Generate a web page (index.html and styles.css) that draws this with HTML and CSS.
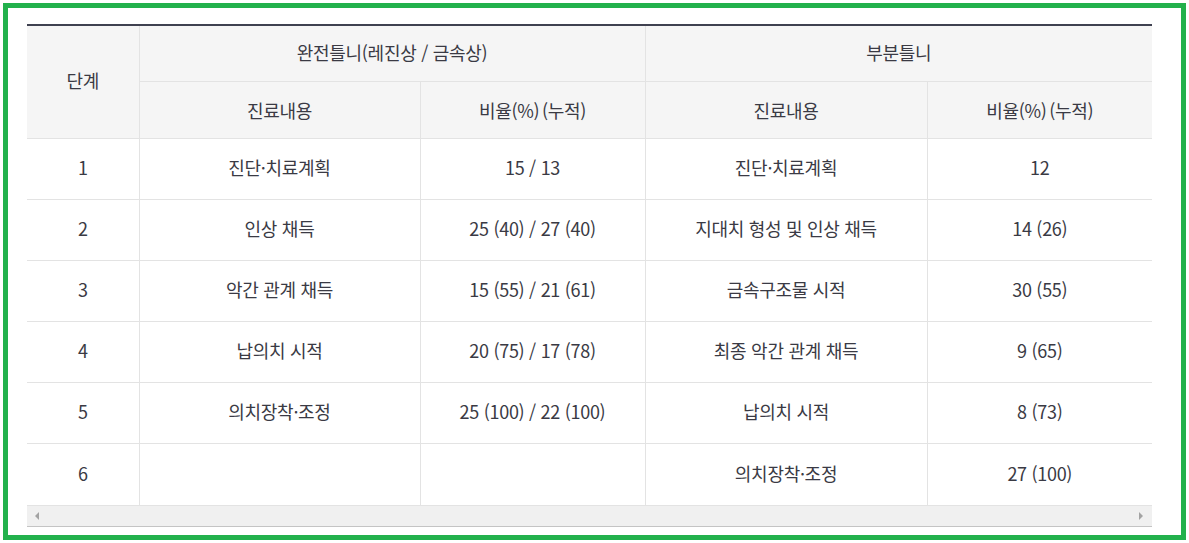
FILE: index.html
```html
<!DOCTYPE html>
<html lang="ko">
<head>
<meta charset="utf-8">
<link rel="stylesheet" href="styles.css">
</head>
<body>
<div class="frame">
  <div class="scroller">
    <table class="stage-table">
      <colgroup>
        <col class="c-step"><col class="c-wide"><col class="c-narrow"><col class="c-wide2"><col class="c-narrow2">
      </colgroup>
      <thead>
        <tr class="h1">
          <th rowspan="2" class="first">단계</th>
          <th colspan="2">완전틀니(레진상 / 금속상)</th>
          <th colspan="2">부분틀니</th>
        </tr>
        <tr class="h2">
          <th>진료내용</th>
          <th class="tight">비율(%) (누적)</th>
          <th>진료내용</th>
          <th class="tight">비율(%) (누적)</th>
        </tr>
      </thead>
      <tbody>
        <tr><td class="first">1</td><td>진단·치료계획</td><td>15 / 13</td><td>진단·치료계획</td><td>12</td></tr>
        <tr><td class="first">2</td><td>인상 채득</td><td>25 (40) / 27 (40)</td><td>지대치 형성 및 인상 채득</td><td>14 (26)</td></tr>
        <tr><td class="first">3</td><td>악간 관계 채득</td><td>15 (55) / 21 (61)</td><td>금속구조물 시적</td><td>30 (55)</td></tr>
        <tr><td class="first">4</td><td>납의치 시적</td><td>20 (75) / 17 (78)</td><td>최종 악간 관계 채득</td><td>9 (65)</td></tr>
        <tr><td class="first">5</td><td>의치장착·조정</td><td>25 (100) / 22 (100)</td><td>납의치 시적</td><td>8 (73)</td></tr>
        <tr class="last"><td class="first">6</td><td></td><td></td><td>의치장착·조정</td><td>27 (100)</td></tr>
      </tbody>
    </table>
  </div>
  <div class="hscroll">
    <span class="arrow left"></span>
    <span class="arrow right"></span>
  </div>
</div>
</body>
</html>
```
FILE: styles.css
```css
* { box-sizing: border-box; }
html, body { margin: 0; padding: 0; background: #fff; }
body {
  font-family: "Noto Sans CJK KR", "Noto Sans", sans-serif;
  color: #3a3a44;
  padding: 3px;
}
.frame {
  width: 1183px;
  height: 537px;
  border: 5px solid #22b14c;
  padding: 16px 0 0 19px;
}
.scroller {
  width: 1125px;
  overflow: hidden;
}
.stage-table {
  width: 1125px;
  border-collapse: collapse;
  table-layout: fixed;
  border-top: 2px solid #3f4150;
  font-size: 18px;
  letter-spacing: -0.3px;
}
.c-step { width: 112px; }
.c-wide { width: 281px; }
.c-narrow { width: 225px; }
.c-wide2 { width: 282px; }
.c-narrow2 { width: 225px; }
th, td {
  text-align: center;
  vertical-align: middle;
  font-weight: 400;
  border-left: 1px solid #e3e3e3;
  border-bottom: 1px solid #e3e3e3;
  padding: 0;
}
.first { border-left: none; }
thead th { background: #f5f5f5; }
.tight { word-spacing: -2px; }
.h1 th { height: 56px; padding-bottom: 3px; }
.h2 th { height: 57px; }
tbody td { height: 61px; padding-bottom: 3px; }
tbody tr.last td { border-bottom: none; height: 62px; }
.hscroll {
  width: 1125px;
  height: 22px;
  background: #f0f0f0;
  border-top: 1px solid #e3e3e3;
  border-bottom: 1px solid #c4c4c4;
  display: flex;
  align-items: center;
  justify-content: space-between;
  padding: 0 9px 0 8px;
}
.arrow {
  width: 0;
  height: 0;
  border-top: 4px solid transparent;
  border-bottom: 4px solid transparent;
}
.arrow.left { border-right: 4px solid #a3a3a3; }
.arrow.right { border-left: 4px solid #a3a3a3; }
```
